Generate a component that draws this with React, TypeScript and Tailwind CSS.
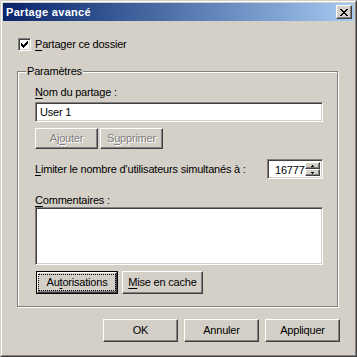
import React from "react";

const raised = "border border-t-white border-l-white border-r-[#404040] border-b-[#404040] shadow-[inset_-1px_-1px_0_#808080]";
const sunken = "border border-t-[#808080] border-l-[#808080] border-r-white border-b-white shadow-[inset_1px_1px_0_#404040,inset_-1px_-1px_0_#d4d0c8]";

// pixel glyphs, one string per row
const closeGlyph = ["XX....XX", ".XX..XX.", "..XXXX..", "...XX...", "..XXXX..", ".XX..XX.", "XX....XX"];
const checkGlyph = ["......X", ".....XX", "X...XXX", "XX.XXX.", "XXXXX..", ".XXX...", "..X...."];
const upGlyph = [".X.", "XXX"];
const downGlyph = ["XXX", ".X."];

function PixelGlyph({ rows, color = "#000" }: { rows: string[]; color?: string }) {
    const w = rows[0].length;
    const h = rows.length;
    return (
        <svg width={w} height={h} viewBox={`0 0 ${w} ${h}`} shapeRendering="crispEdges" className="block">
            {rows.map((row, y) =>
                row.split("").map((c, x) => (c === "X" ? <rect key={`${x}-${y}`} x={x} y={y} width={1} height={1} fill={color} /> : null))
            )}
        </svg>
    );
}

function Accel({ text, at }: { text: string; at: number }) {
    return (
        <>
            {text.slice(0, at)}
            <span className="underline underline-offset-[2px]">{text[at]}</span>
            {text.slice(at + 1)}
        </>
    );
}

function WinButton({ children, className = "", disabled }: { children: React.ReactNode; className?: string; disabled?: boolean }) {
    return (
        <button
            className={`${raised} ${className} flex items-center justify-center bg-[#d4d0c8] ${
                disabled ? "text-[#808080] [text-shadow:1px_1px_0_#fff]" : "text-black"
            }`}
        >
            {children}
        </button>
    );
}

export default function App() {
    return (
        <div className="w-[357px] h-[357px] bg-[#d4d0c8] border border-t-[#d4d0c8] border-l-[#d4d0c8] border-r-[#404040] border-b-[#404040] font-['Liberation_Sans',Arial,sans-serif] text-[11px] leading-[13px] tracking-[-0.2px] text-black select-none">
            <div className="h-full border border-t-white border-l-white border-r-[#808080] border-b-[#808080] p-px flex flex-col">
                {/* Title bar */}
                <div className="h-[18px] flex items-center justify-between pl-[3px] pr-[2px] bg-linear-to-r from-[#0a246a] to-[#a6caf0]">
                    <span className="text-white font-bold text-[11px] tracking-[0.3px]">Partage avancé</span>
                    <div className={`${raised} w-[16px] h-[14px] bg-[#d4d0c8] flex items-center justify-center`}>
                        <PixelGlyph rows={closeGlyph} />
                    </div>
                </div>

                {/* Body */}
                <div className="flex-1 flex flex-col pl-[14px] pr-[14px] pt-[17px]">
                    <div className="flex items-center gap-[4px] ml-px h-[13px]">
                        <div className={`${sunken} w-[13px] h-[13px] bg-white flex items-center justify-center`}>
                            <PixelGlyph rows={checkGlyph} />
                        </div>
                        <span><Accel text="Partager ce dossier" at={0} /></span>
                    </div>

                    {/* Group box */}
                    <div className="relative mt-[20px] w-[321px] border border-[#808080] shadow-[1px_1px_0_#fff,inset_1px_1px_0_#fff] pl-[17px] pt-[14px] pb-[12px] flex flex-col">
                        <span className="absolute left-[8px] -top-[7px] bg-[#d4d0c8] px-px">Paramètres</span>

                        <span className="h-[13px]"><Accel text="Nom du partage :" at={0} /></span>
                        <input
                            readOnly
                            defaultValue="User 1"
                            className={`${sunken} mt-[3px] w-[288px] h-[20px] bg-white px-[4px] text-[11px] tracking-[-0.2px] outline-none`}
                        />

                        <div className="mt-[6px] flex gap-[2px]">
                            <WinButton disabled className="w-[63px] h-[21px]"><Accel text="Ajouter" at={2} /></WinButton>
                            <WinButton disabled className="w-[63px] h-[21px]"><Accel text="Supprimer" at={1} /></WinButton>
                        </div>

                        <div className="mt-[10px] w-[288px] h-[20px] flex items-center justify-between">
                            <span><Accel text="Limiter le nombre d’utilisateurs simultanés à :" at={0} /></span>
                            <div className={`${sunken} w-[56px] h-[20px] bg-white flex p-[2px]`}>
                                <div className="flex-1 overflow-hidden whitespace-nowrap pl-[5px] leading-[16px]">16777216</div>
                                <div className="w-[15px] flex flex-col">
                                    <div className={`${raised} h-[8px] bg-[#d4d0c8] flex items-center justify-center`}>
                                        <PixelGlyph rows={upGlyph} />
                                    </div>
                                    <div className={`${raised} h-[8px] bg-[#d4d0c8] flex items-center justify-center`}>
                                        <PixelGlyph rows={downGlyph} />
                                    </div>
                                </div>
                            </div>
                        </div>

                        <span className="mt-[15px] h-[13px]"><Accel text="Commentaires :" at={0} /></span>
                        <textarea readOnly className={`${sunken} w-[288px] h-[58px] bg-white resize-none outline-none`} />

                        <div className="mt-[6px] ml-px flex gap-[4px]">
                            <div className="w-[82px] h-[23px] border border-black">
                                <div className={`${raised} relative h-full bg-[#d4d0c8] flex items-center justify-center`}>
                                    <span className="absolute inset-x-0 inset-y-px border border-dotted border-black" />
                                    <span><Accel text="Autorisations" at={2} /></span>
                                </div>
                            </div>
                            <WinButton className="w-[81px] h-[23px]"><Accel text="Mise en cache" at={0} /></WinButton>
                        </div>
                    </div>

                    {/* Dialog buttons */}
                    <div className="mt-[12px] flex justify-end gap-[6px]">
                        <WinButton className="w-[75px] h-[23px]">OK</WinButton>
                        <WinButton className="w-[75px] h-[23px]">Annuler</WinButton>
                        <WinButton className="w-[75px] h-[23px]">Appliquer</WinButton>
                    </div>
                </div>
            </div>
        </div>
    );
}
